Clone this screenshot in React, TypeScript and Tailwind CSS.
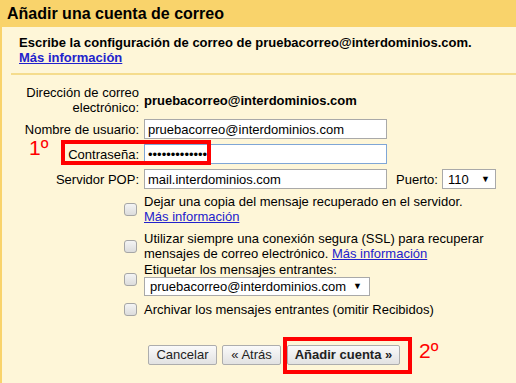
import React from "react";

const Checkbox = () => (
  <span className="inline-block w-[13px] h-[13px] rounded-[3px] border border-[#a6a6a6] bg-gradient-to-b from-[#f4f4f4] to-[#dcdcdc]" />
);

const Arrow = () => <span className="text-[9px] leading-none">▼</span>;

const Btn = ({ children, bold, w }: { children: React.ReactNode; bold?: boolean; w: string }) => (
  <div
    className={`${w} shrink-0 h-[20px] flex items-center justify-center border border-[#adadad] rounded-[2px] bg-gradient-to-b from-[#fafafa] to-[#e2e2e2] text-[13px] text-[#222] ${bold ? "font-bold" : ""}`}
  >
    {children}
  </div>
);

export default function App() {
  return (
    <div className="relative w-[516px] h-[383px] overflow-hidden bg-[#fef6d8] text-black text-[13px] font-['Liberation_Sans',Arial,sans-serif]">
      <div className="h-[27px] bg-[#f9d36b] pl-[7px] text-[16px] font-bold leading-[27px]">
        Añadir una cuenta de correo
      </div>
      <div className="border-l-2 border-[#f9d36b] h-[356px]">
        <div className="pl-[17px] pt-[8px] font-bold leading-[15px]">
          <div>Escribe la configuración de correo de pruebacorreo@interdominios.com.</div>
          <div className="text-[#2222cc] underline">Más información</div>
        </div>
        <div className="ml-[9px] mt-[8px] h-[2px] bg-[#f5dc8d]" />

        <div className="grid grid-cols-[137px_372px] gap-x-[5px] mt-[10px] leading-[15px]">
          <div className="text-right">
            Dirección de correo
            <br />
            electrónico:
          </div>
          <div className="self-center font-bold">pruebacorreo@interdominios.com</div>

          <div className="text-right self-center mt-[4px]">Nombre de usuario:</div>
          <div className="mt-[4px] w-[243px] h-[20px] border border-[#a9a9a9] bg-white px-[3px] flex items-center">
            pruebacorreo@interdominios.com
          </div>

          <div className="text-right self-center mt-[5px]">Contraseña:</div>
          <div className="mt-[5px] w-[243px] h-[20px] border border-[#7fa6d6] bg-white px-[3px] flex items-center">
            •••••••••••••
          </div>

          <div className="text-right self-center mt-[5px]">Servidor POP:</div>
          <div className="mt-[5px] flex items-center">
            <div className="shrink-0 w-[243px] h-[20px] border border-[#a9a9a9] bg-white px-[3px] flex items-center">
              mail.interdominios.com
            </div>
            <span className="shrink-0 ml-[9px]">Puerto:</span>
            <div className="shrink-0 ml-[4px] w-[54px] h-[20px] border border-[#a9a9a9] bg-white pl-[5px] pr-[5px] flex items-center justify-between">
              <span>110</span>
              <Arrow />
            </div>
          </div>

          <div className="flex items-center justify-end pr-[2px] mt-[5px]">
            <Checkbox />
          </div>
          <div className="mt-[5px]">
            Dejar una copia del mensaje recuperado en el servidor.
            <br />
            <span className="text-[#2222cc] underline">Más información</span>
          </div>

          <div className="flex items-center justify-end pr-[2px] mt-[7px]">
            <Checkbox />
          </div>
          <div className="mt-[7px]">
            Utilizar siempre una conexión segura (SSL) para recuperar
            <br />
            mensajes de correo electrónico.{" "}
            <span className="text-[#2222cc] underline">Más información</span>
          </div>

          <div className="flex items-center justify-end pr-[2px] mt-[1px]">
            <Checkbox />
          </div>
          <div className="mt-[1px]">
            <div>Etiquetar los mensajes entrantes:</div>
            <div className="w-[226px] h-[19px] border border-[#a9a9a9] bg-white pl-[5px] pr-[7px] flex items-center justify-between">
              <span>pruebacorreo@interdominios.com</span>
              <Arrow />
            </div>
          </div>

          <div className="flex items-center justify-end pr-[2px] mt-[6px]">
            <Checkbox />
          </div>
          <div className="mt-[6px]">Archivar los mensajes entrantes (omitir Recibidos)</div>
        </div>

        <div className="flex items-center ml-[146px] mt-[28px]">
          <Btn w="w-[69px]">Cancelar</Btn>
          <div className="ml-[5px]">
            <Btn w="w-[59px]">« Atrás</Btn>
          </div>
          <div className="ml-[6px]">
            <Btn w="w-[113px]" bold>
              Añadir cuenta »
            </Btn>
          </div>
        </div>
      </div>

      {/* annotations */}
      <div className="absolute left-[61px] top-[140px] w-[150px] h-[25px] border-4 border-[#ff0000]" />
      <div className="absolute left-[29px] top-[136px] text-[21px] leading-[24px] text-[#ff0000]">1º</div>
      <div className="absolute left-[283px] top-[337px] w-[129px] h-[37px] border-4 border-[#ff0000]" />
      <div className="absolute left-[419px] top-[339px] text-[21px] leading-[24px] text-[#ff0000]">2º</div>
    </div>
  );
}
